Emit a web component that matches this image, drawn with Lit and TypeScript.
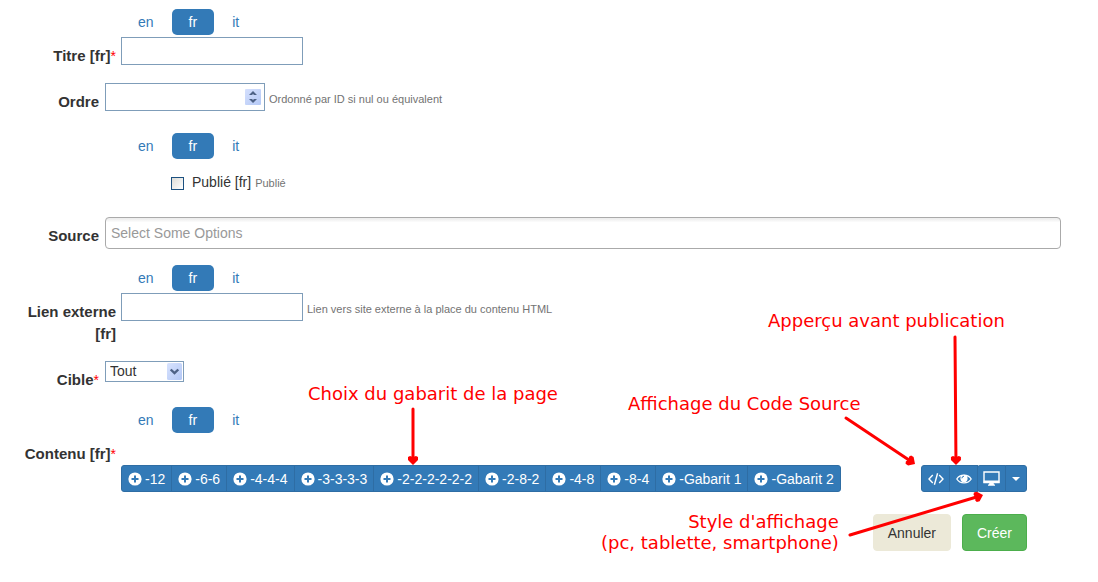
import { LitElement, html, svg, css, nothing } from "lit";
import { customElement, property, state } from "lit/decorators.js";
import { classMap } from "lit/directives/class-map.js";

const LANGS = ["en", "fr", "it"];
const TEMPLATES = ["12", "6-6", "4-4-4", "3-3-3-3", "2-2-2-2-2-2", "2-8-2", "4-8", "8-4", "Gabarit 1", "Gabarit 2"];

/* Arrows of the annotation layer: start and tip, in page coordinates. */
const ARROWS = [
  [413, 409, 413, 465],
  [955, 337, 956, 465],
  [846, 418, 915, 464],
  [850, 535, 983, 495],
];

@customElement("lang-tabs")
export class LangTabs extends LitElement {
  @property() lang = "fr";
  static styles = css`
    :host { display: block; }
    .tabs { display: flex; gap: 1px; margin: 0 0 2px; padding: 0; list-style: none; }
    .tab { display: block; box-sizing: border-box; height: 26px; padding: 0 17px; border-radius: 5px;
      line-height: 26px; color: #337ab7; text-decoration: none; }
    .tab.active { background: #337ab7; color: #fff; }
  `;
  private pick(e: Event, lang: string) {
    e.preventDefault();
    this.lang = lang;
  }
  render() {
    return html`<ul class="tabs">
      ${LANGS.map((l) => html`<li><a href="#${l}" class=${classMap({ tab: true, active: l === this.lang })}
        @click=${(e: Event) => this.pick(e, l)}>${l}</a></li>`)}
    </ul>`;
  }
}

@customElement("app-root")
export class AppRoot extends LitElement {
  @state() private order = "";

  static styles = css`
    :host { display: block; position: relative; background: #fff; color: #333;
      font: 14px/22px "Liberation Sans", Arial, sans-serif; }
    * { box-sizing: border-box; }
    input, select, button { font: inherit; color: inherit; }
    .form { display: flex; flex-direction: column; gap: 16px; padding: 9px 37px 24px 0; }
    .field { display: grid; grid-template-columns: 99px minmax(0, 1fr); column-gap: 6px; align-items: start; }
    .field.localized { grid-template-columns: 116px minmax(0, 1fr); column-gap: 5px; }
    .tabs { grid-column: 2; }
    .label { grid-column: 1; padding: 8px 0 0 20px; text-align: right; font-weight: bold; font-size: 15px; }
    .req { color: #f00; font-weight: normal; font-size: 14px; }
    .control { grid-column: 2; display: flex; align-items: center; gap: 4px; }
    .text { width: 182px; height: 28px; padding: 2px 4px; border: 1px solid #7f9db9; background: #fff; }
    .help { font-size: 11px; color: #737373; padding-top: 3px; line-height: 20px; }
    .number { display: flex; align-items: center; width: 160px; height: 28px; padding-right: 3px;
      border: 1px solid #7f9db9; background: #fff; }
    .number-input { flex: 1; min-width: 0; border: 0; padding: 0 4px; background: none; appearance: textfield; -moz-appearance: textfield; }
    .number-input::-webkit-inner-spin-button { appearance: none; margin: 0; }
    .spin { display: flex; flex-direction: column; width: 16px; border-radius: 1px; overflow: hidden;
      background: linear-gradient(135deg, #d5e0fd, #b5c9f6); }
    .step { display: flex; align-items: center; justify-content: center; height: 8px; padding: 0; border: 0; background: none; }
    .published { margin-top: 4px; }
    .published .control { padding: 9px 0 8px 50px; gap: 0; }
    .check { appearance: none; width: 13px; height: 13px; margin: 3px 8px 0 0; border: 1px solid #1c5180;
      background: linear-gradient(135deg, #dcdcd7, #fff); }
    .check:checked { background: #1c5180; }
    .check-label { margin-right: 4px; }
    .multi { width: 100%; height: 32px; padding: 0 5px; border: 1px solid #aaa; border-radius: 4px;
      background: linear-gradient(#eee 1px, #fff 15%); }
    .multi::placeholder { color: #999; opacity: 1; }
    .select-box { display: grid; width: 79px; height: 21px; }
    .select { grid-area: 1 / 1; appearance: none; border: 1px solid #7f9db9; border-radius: 0; padding: 0 20px 0 4px;
      background: #fff; line-height: 19px; }
    .select-arrow { grid-area: 1 / 1; justify-self: end; align-self: center; margin-right: 2px; pointer-events: none; }
    .toolbar { grid-column: 2; display: flex; justify-content: space-between; padding: 30px 34px 0 0; }
    .group { display: flex; }
    .btn { display: inline-flex; align-items: center; justify-content: center; border: 1px solid #2e6da4;
      background: #337ab7; color: #fff; height: 27px; padding: 0 6px; gap: 3px; white-space: nowrap; line-height: 20px; }
    .btn + .btn { margin-left: -1px; }
    .btn:first-child { border-radius: 3px 0 0 3px; }
    .btn:last-child { border-radius: 0 3px 3px 0; }
    .tool { width: 29px; padding: 0; }
    .tool.caret { width: 22px; }
    .tool.device { border-radius: 3px 0 0 3px; }
    .icon { display: block; flex: none; }
    .actions { display: flex; justify-content: flex-end; gap: 11px; margin-top: 6px; padding-right: 34px; }
    .action { height: 37px; padding: 0 14px; border: 1px solid #ece9d8; border-radius: 4px; background: #ece9d8; }
    .action.create { border-color: #4cae4c; background: #5cb85c; color: #fff; }
    .notes { position: absolute; inset: 0; overflow: hidden; pointer-events: none; color: #f00;
      font: 18px/21px "DejaVu Sans", sans-serif; }
    .lines { position: absolute; inset: 0; width: 100%; height: 100%; }
    .note { position: absolute; margin: 0; white-space: nowrap; }
    .note.template { left: 308px; top: 383px; }
    .note.source { left: 628px; top: 393px; }
    .note.preview { left: 768px; top: 310px; }
    .note.device { left: 601px; top: 511px; text-align: right; }
  `;

  private step(n: number) {
    this.order = String((Number(this.order) || 0) + n);
  }

  private req() {
    return html`<span class="req">*</span>`;
  }

  private textField(id: string, label: string, required: boolean, help = "") {
    return html`<div class="field localized">
      <lang-tabs class="tabs"></lang-tabs>
      <label class="label" for=${id}>${label}${required ? this.req() : nothing}</label>
      <div class="control"><input class="text" id=${id} type="text">${help ? html`<span class="help">${help}</span>` : nothing}</div>
    </div>`;
  }

  private plus() {
    return html`<svg class="icon" width="14" height="14" viewBox="0 0 14 14" aria-hidden="true">
      <circle cx="7" cy="7" r="6.6" fill="#fff"/><path d="M7 3.5v7M3.5 7h7" stroke="#337ab7" stroke-width="2"/></svg>`;
  }

  private arrow([x1, y1, x2, y2]: number[]) {
    const len = Math.hypot(x2 - x1, y2 - y1);
    const ux = (x2 - x1) / len;
    const uy = (y2 - y1) / len;
    const at = (back: number, side: number) => `${x2 - ux * back - uy * side},${y2 - uy * back + ux * side}`;
    return svg`<line x1=${x1} y1=${y1} x2=${x2 - ux * 5} y2=${y2 - uy * 5} stroke="#f00" stroke-width="3" stroke-linecap="round"/>
      <polygon points=${[at(0, 0), at(5, 5), at(8, 5), at(9, 3), at(8, 0), at(9, -3), at(8, -5), at(5, -5)].join(" ")} fill="#f00"/>`;
  }

  render() {
    return html`
      <form class="form" @submit=${(e: Event) => e.preventDefault()}>
        ${this.textField("titre", "Titre [fr]", true)}

        <div class="field">
          <label class="label" for="ordre">Ordre</label>
          <div class="control">
            <div class="number">
              <input class="number-input" id="ordre" type="number" .value=${this.order}
                @input=${(e: Event) => (this.order = (e.target as HTMLInputElement).value)}>
              <div class="spin">
                <button class="step" type="button" aria-label="+1" @click=${() => this.step(1)}>
                  <svg class="icon" width="8" height="4" viewBox="0 0 8 4"><path d="M4 0L8 4H5L4 3L3 4H0z" fill="#4d6185"/></svg></button>
                <button class="step" type="button" aria-label="-1" @click=${() => this.step(-1)}>
                  <svg class="icon" width="8" height="4" viewBox="0 0 8 4"><path d="M4 4L8 0H5L4 1L3 0H0z" fill="#4d6185"/></svg></button>
              </div>
            </div>
            <span class="help">Ordonné par ID si nul ou équivalent</span>
          </div>
        </div>

        <div class="field localized published">
          <lang-tabs class="tabs"></lang-tabs>
          <div class="control">
            <input class="check" id="publie" type="checkbox">
            <label class="check-label" for="publie">Publié [fr]</label><span class="help">Publié</span>
          </div>
        </div>

        <div class="field">
          <label class="label" for="source">Source</label>
          <div class="control"><input class="multi" id="source" type="text" placeholder="Select Some Options"></div>
        </div>

        ${this.textField("lien", "Lien externe [fr]", false, "Lien vers site externe à la place du contenu HTML")}

        <div class="field">
          <label class="label" for="cible">Cible${this.req()}</label>
          <div class="control">
            <div class="select-box">
              <select class="select" id="cible"><option>Tout</option></select>
              <svg class="select-arrow" width="15" height="17" viewBox="0 0 15 17" aria-hidden="true">
                <defs><linearGradient id="sky" x2="1" y2="1"><stop stop-color="#d8e3fe"/><stop offset="1" stop-color="#b3c7f5"/></linearGradient></defs>
                <rect width="15" height="17" rx="1.5" fill="url(#sky)"/>
                <path d="M3.7 6.5L7.5 10.2L11.3 6.5" fill="none" stroke="#4d6185" stroke-width="2.4"/></svg>
            </div>
          </div>
        </div>

        <div class="field localized">
          <lang-tabs class="tabs"></lang-tabs>
          <span class="label">Contenu [fr]${this.req()}</span>
          <div class="toolbar">
            <div class="group">
              ${TEMPLATES.map((t) => html`<button class="btn" type="button">${this.plus()}<span>-${t}</span></button>`)}
            </div>
            <div class="group">
              <button class="btn tool" type="button" aria-label="Code Source">
                <svg class="icon" width="16" height="14" viewBox="0 0 16 14" fill="none" stroke="#fff" stroke-width="1.4">
                  <path d="M4.8 3L1 7L4.8 11M11.2 3L15 7L11.2 11M9.6 1.2L6.4 12.8"/></svg></button>
              <button class="btn tool" type="button" aria-label="Publication">
                <svg class="icon" width="16" height="14" viewBox="0 0 16 14">
                  <path d="M.8 7C4 1.8 12 1.8 15.2 7C12 12.2 4 12.2.8 7z" fill="none" stroke="#fff" stroke-width="1.3"/>
                  <circle cx="8" cy="6.4" r="3.6" fill="#fff"/><path d="M5.9 6.3A2.2 2.2 0 0 1 8 4.2" fill="none" stroke="#337ab7"/></svg></button>
              <button class="btn tool device" type="button" aria-label="PC">
                <svg class="icon" width="17" height="16" viewBox="0 0 17 16">
                  <path d="M1 1h15v10.5H1z" fill="#337ab7" stroke="#fff" stroke-width="1.4"/>
                  <path d="M.6 9.6h15.8v2.3H.6zM6.5 11.5h4l.5 2h1v1.2H5v-1.2h1z" fill="#fff"/></svg></button>
              <button class="btn tool caret" type="button" aria-label="Style">
                <svg class="icon" width="8" height="4" viewBox="0 0 8 4"><path d="M0 0h8L4 4z" fill="#fff"/></svg></button>
            </div>
          </div>
        </div>

        <div class="actions">
          <button class="action" type="button">Annuler</button>
          <button class="action create" type="submit">Créer</button>
        </div>
      </form>

      <div class="notes">
        <svg class="lines" aria-hidden="true">${ARROWS.map((a) => this.arrow(a))}</svg>
        <p class="note preview">Apperçu avant publication</p>
        <p class="note template">Choix du gabarit de la page</p>
        <p class="note source">Affichage du Code Source</p>
        <p class="note device">Style d'affichage<br>(pc, tablette, smartphone)</p>
      </div>
    `;
  }
}
